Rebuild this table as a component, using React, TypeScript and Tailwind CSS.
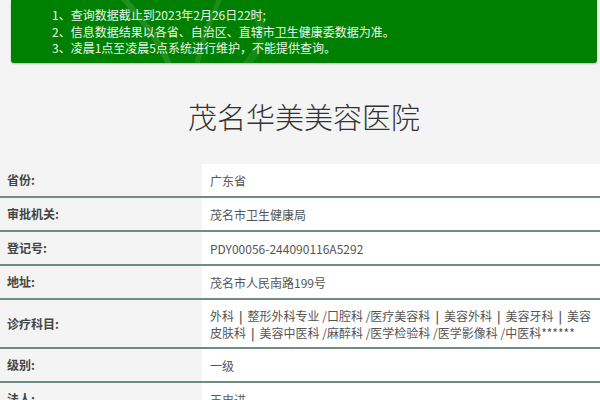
import React from "react";

const Sep = () => <span className="mx-[5px] font-bold text-[#555]">|</span>;

const rows: { label: string; value: React.ReactNode; tall?: boolean }[] = [
  { label: "省份:", value: "广东省" },
  { label: "审批机关:", value: "茂名市卫生健康局" },
  { label: "登记号:", value: "PDY00056-244090116A5292" },
  { label: "地址:", value: "茂名市人民南路199号" },
  {
    label: "诊疗科目:",
    tall: true,
    value: (
      <>
        <span className="block whitespace-nowrap">
          外科<Sep />整形外科专业 /口腔科 /医疗美容科<Sep />美容外科<Sep />美容牙科<Sep />美容
        </span>
        <span className="block whitespace-nowrap">
          皮肤科<Sep />美容中医科 /麻醉科 /医学检验科 /医学影像科 /中医科******
        </span>
      </>
    ),
  },
  { label: "级别:", value: "一级" },
  { label: "法人:", value: "王忠进" },
];

export default function App() {
  return (
    <div
      className="w-[600px] h-[400px] overflow-hidden bg-[#f4f4f4] text-[#333]"
      style={{ fontFamily: '"Noto Sans CJK SC", "Noto Sans", sans-serif' }}
    >
      <div className="pl-[11px] pr-[3px]">
        <div className="relative h-[63px] bg-[#008000] rounded-b-[3px] shadow-[0_1px_2px_rgba(0,0,0,0.25)] overflow-hidden">
          <svg className="absolute left-[90px] top-0" width="200" height="64" viewBox="0 0 200 64" fill="none">
            <path d="M20 -5 C 40 20, 60 40, 70 70" stroke="rgba(255,255,255,0.12)" strokeWidth="6" />
            <path d="M120 -5 C 110 20, 100 40, 95 70" stroke="rgba(255,255,255,0.1)" strokeWidth="5" />
            <path d="M150 10 C 170 30, 160 50, 140 70" stroke="rgba(255,255,255,0.08)" strokeWidth="8" />
          </svg>
          <div className="relative pl-[41px] pt-[7px] text-[12px] leading-[16.5px] text-[#eef7ee]">
            <p>1、查询数据截止到2023年2月26日22时;</p>
            <p>2、信息数据结果以各省、自治区、直辖市卫生健康委数据为准。</p>
            <p>3、凌晨1点至凌晨5点系统进行维护，不能提供查询。</p>
          </div>
        </div>
      </div>

      <h1 className="mt-[35px] pl-[8px] text-center text-[29px] leading-[36px] font-light text-[#333]">
        茂名华美美容医院
      </h1>

      <div className="mt-[30px]">
        {rows.map((r, i) => (
          <div
            key={i}
            className={`flex border-b-[2px] border-[#6e8c82] ${r.tall ? "h-[49px]" : "h-[34px]"}`}
          >
            <div className="w-[202px] shrink-0 pl-[7px] flex items-center text-[12px] font-bold text-[#444]">
              {r.label}
            </div>
            <div className="flex-1 bg-white pl-[8px] flex flex-col justify-center text-[12px] leading-[17px] text-[#555] overflow-hidden">
              {r.value}
            </div>
          </div>
        ))}
      </div>
    </div>
  );
}
